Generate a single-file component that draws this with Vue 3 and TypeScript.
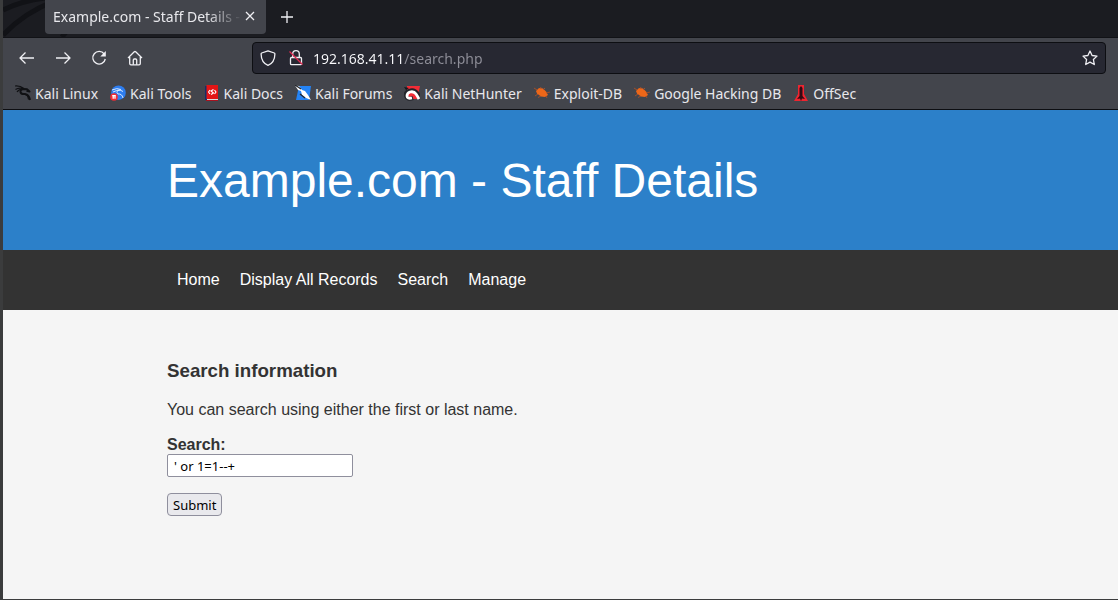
<script setup lang="ts">
import { ref } from 'vue'

interface Bookmark {
  icon: 'linux' | 'tools' | 'docs' | 'forums' | 'nethunter' | 'bug' | 'offsec'
  label: string
}

const bookmarks: Bookmark[] = [
  { icon: 'linux', label: 'Kali Linux' },
  { icon: 'tools', label: 'Kali Tools' },
  { icon: 'docs', label: 'Kali Docs' },
  { icon: 'forums', label: 'Kali Forums' },
  { icon: 'nethunter', label: 'Kali NetHunter' },
  { icon: 'bug', label: 'Exploit-DB' },
  { icon: 'bug', label: 'Google Hacking DB' },
  { icon: 'offsec', label: 'OffSec' },
]

const menu: string[] = ['Home', 'Display All Records', 'Search', 'Manage']
const address = ref('192.168.41.11/search.php')
const query = ref("' or 1=1--+")
</script>

<template>
  <div class="window">
    <header class="chrome">
      <div class="tabs">
        <svg class="wallpaper" viewBox="0 0 90 37" aria-hidden="true">
          <path d="M0 10Q18 1 42-2M0 35Q22 12 52 1M59 37Q68 24 86 16" />
        </svg>
        <div class="tab">
          <span class="tab-title">Example.com - Staff Details -</span>
          <button type="button" class="tab-close" aria-label="Close tab">
            <svg width="10" height="10" viewBox="0 0 10 10"><path d="M1 1l8 8M9 1l-8 8" /></svg>
          </button>
        </div>
        <button type="button" class="new-tab" aria-label="New tab">
          <svg width="14" height="14" viewBox="0 0 14 14"><path d="M7 1v12M1 7h12" /></svg>
        </button>
      </div>

      <div class="toolbar">
        <div class="history">
          <button type="button" aria-label="Back">
            <svg width="16" height="16" viewBox="0 0 16 16"><path d="M15 8H1.500M6.500 2.500L1 8l5.500 5.500" /></svg>
          </button>
          <button type="button" aria-label="Forward">
            <svg width="16" height="16" viewBox="0 0 16 16"><path d="M1 8h13.500M9.500 2.500L15 8l-5.500 5.500" /></svg>
          </button>
          <button type="button" aria-label="Reload">
            <svg width="16" height="16" viewBox="0 0 16 16">
              <path d="M13.200 4A6.300 6.300 0 1 0 14.300 9" />
              <path class="solid" d="M14.800 1v5.500H9.300z" />
            </svg>
          </button>
          <button type="button" aria-label="Home">
            <svg width="16" height="16" viewBox="0 0 16 16">
              <path d="M1 8l6.300-6.200q.7-.6 1.400 0L15 8M2.700 7v6.500q0 1.300 1.300 1.300h8q1.300 0 1.300-1.300V7" />
              <path d="M6.300 14.800V10q0-1 1-1h1.400q1 0 1 1v4.800" />
            </svg>
          </button>
        </div>
        <div class="address">
          <svg width="16" height="16" viewBox="0 0 16 16" aria-hidden="true">
            <path d="M8 .8L14.300 3q.6.2.6.9C14.800 9 12.500 13.500 8 15.300 3.500 13.500 1.200 9 1.100 3.900q0-.7.6-.9z" />
          </svg>
          <svg width="16" height="16" viewBox="0 0 16 16" aria-hidden="true">
            <path d="M4.700 7V4a3.300 3.300 0 0 1 6.600 0v3" />
            <rect x="2.500" y="7.500" width="11" height="7.200" rx="1" />
            <path class="strike" d="M1.500 1.500l13 13" />
          </svg>
          <input v-model="address" class="address-input" type="text" aria-label="Address" spellcheck="false" />
          <button type="button" aria-label="Bookmark this page">
            <svg width="16" height="16" viewBox="0 0 16 16">
              <path d="M8 1l2.100 4.500 4.900.6-3.600 3.400.9 5L8 12.100 3.700 14.500l.9-5L1 6.100l4.900-.6z" />
            </svg>
          </button>
        </div>
      </div>

      <nav class="bookmarks" aria-label="Bookmarks">
        <a v-for="item in bookmarks" :key="item.label" href="#" class="bookmark">
          <svg width="16" height="16" viewBox="0 0 16 16" aria-hidden="true">
            <g v-if="item.icon === 'linux'" class="dragon">
              <path d="M0 1Q5 .5 9 3.500M.5 4.500Q4 2 9 3.800M2 7Q4 4 8 4" />
              <path class="thick" d="M9 4Q5 4.500 5.500 7t4.500 2q4 .5 5 6M9 4l3 .3 2.500 2.200-3-.7" />
              <path d="M10 9.500q3 .5 3.500 5" />
            </g>
            <g v-else-if="item.icon === 'tools'">
              <circle cx="8.500" cy="7.700" r="7.300" fill="#2d7df0" />
              <path d="M2 5q5-2.500 9-.5M3 7q4-2 7-2M10 5q-5 1-2 4 4-.5 5 4M10 5l3 1.500" fill="none" stroke="#d5e8ff" stroke-width="1" />
              <circle cx="4" cy="12" r="3.800" fill="#f02c35" />
              <path d="M2.200 10.700h3.600M3.200 10.700v3M5 10.700v3" stroke="#fff" fill="none" />
            </g>
            <g v-else-if="item.icon === 'docs'">
              <path d="M1 1h2v14H1z" fill="#162e68" />
              <path d="M2.500 0H14v14H2.500z" fill="#e31515" />
              <path d="M3 14h11v1H3z" fill="#ddd" />
              <path d="M2 15h12v1H2z" fill="#a71320" />
              <path d="M6 5L4.500 7 6 9M10.500 5L12 7l-1.500 2M9.500 4.500L7 6l2.500 2L7 9.500" stroke="#fff" stroke-width="1.200" fill="none" />
            </g>
            <g v-else-if="item.icon === 'forums'">
              <path d="M4 1h12l-2 14H1z" fill="#2483f5" />
              <path d="M0 .5L4 1l3 4 3 1 3 4 3 5-5-2-4-3-1-4-3-1z" fill="#fff" />
              <path d="M0 0l6 4M5 9l5 4" stroke="#24262c" />
            </g>
            <g v-else-if="item.icon === 'nethunter'">
              <path d="M3 1h13l-3 13H3z" fill="#f12c36" />
              <path d="M9 13q-6 2-7-2t3-5q5-2 8 2t2 6" stroke="#22242a" stroke-width="4" fill="none" />
              <path d="M8 13q-5 1-5-2t3-4q4-1 6 2t3 5" stroke="#fff" stroke-width="2.800" fill="none" />
              <path d="M0 2l5 1-3 2" fill="#15171c" />
            </g>
            <g v-else-if="item.icon === 'bug'">
              <path d="M2 6l3-3 4 .5 3 3 2 3.500-3 2-4-.5-4-3z" fill="#ed6719" />
              <path d="M3 5L0 3M6 4l1-2M9 5l2-2M12 8l4-1M4 9l-3 2M7 11l-3 1.500M12 11l1 2" stroke="#b95225" stroke-width=".8" fill="none" />
            </g>
            <g v-else>
              <path d="M5 0h6v9l4 7H1l4-7z" fill="#ed2530" />
              <path d="M8 1l1.500 2v8l2.500 3-3-.5L8 16l-1-2.500-3 .5 2.500-3V3z" fill="#300b14" />
            </g>
          </svg>
          <span>{{ item.label }}</span>
        </a>
      </nav>
    </header>

    <div class="page">
      <header class="banner"><h1>Example.com - Staff Details</h1></header>
      <nav class="menu" aria-label="Main">
        <a v-for="entry in menu" :key="entry" href="#">{{ entry }}</a>
      </nav>
      <main class="content">
        <h3>Search information</h3>
        <p>You can search using either the first or last name.</p>
        <form @submit.prevent>
          <label for="search">Search:</label>
          <input id="search" v-model="query" type="text" spellcheck="false" />
          <button type="submit">Submit</button>
        </form>
      </main>
    </div>
  </div>
</template>

<style>
body {
  margin: 0;
}
</style>

<style scoped>
* {
  box-sizing: border-box;
}

.window {
  display: flex;
  flex-direction: column;
  min-height: 100vh;
  border-left: 3px solid #3b3c3d;
  border-bottom: 1px solid #3b3c3d;
  background: #f5f5f5;
}

.chrome {
  background: #43454c;
  color: #e8e8ec;
  font-family: "Noto Sans", sans-serif;
  font-size: 14px;
  border-bottom: 1px solid #0d0e12;
}

.chrome button {
  display: flex;
  align-items: center;
  justify-content: center;
  padding: 0;
  border: 0;
  background: none;
  color: inherit;
}

.chrome svg {
  flex: none;
  fill: none;
  stroke: #f0f0f4;
  stroke-width: 1.3;
  stroke-linejoin: round;
}

.tabs {
  position: relative;
  display: flex;
  align-items: flex-start;
  height: 38px;
  padding-left: 42px;
  background: #1b1c21;
  border-bottom: 1px solid #111216;
}

.chrome .wallpaper {
  position: absolute;
  left: 0;
  top: 0;
  width: 90px;
  height: 37px;
  stroke: #111216;
  stroke-width: 5;
}

.tab {
  position: relative;
  display: flex;
  align-items: center;
  width: 221px;
  height: 34px;
  padding: 0 8px 2px;
  background: #43454c;
  border-radius: 0 0 4px 4px;
}

.tab-title {
  flex: 1;
  white-space: nowrap;
  mask-image: linear-gradient(to left, transparent, #000 36px);
}

.tab-close {
  width: 16px;
  height: 16px;
}

.new-tab {
  width: 42px;
  height: 34px;
}

.toolbar {
  display: flex;
  align-items: center;
  height: 40px;
  padding: 0 12px 0 6px;
}

.history {
  display: flex;
  width: 243px;
}

.history button {
  width: 36px;
  height: 32px;
}

.chrome .solid {
  fill: #f0f0f4;
  stroke: none;
}

.chrome .strike {
  stroke: #e22850;
}

.address {
  display: flex;
  flex: 1;
  align-items: center;
  gap: 12px;
  height: 32px;
  padding: 0 7px;
  background: #272832;
  border: 1px solid #0d0e12;
  border-radius: 4px;
}

.address-input {
  flex: 1;
  min-width: 0;
  height: 28px;
  margin-left: -3px;
  padding: 0;
  border: 0;
  color: #fbfbfe;
  background: linear-gradient(to right, #fbfbfe 89px, #8f8f99 89px);
  background-clip: text;
  -webkit-text-fill-color: transparent;
  font: 14px "Noto Sans", sans-serif;
}

.bookmarks {
  display: flex;
  align-items: center;
  gap: 12px;
  height: 31px;
  padding: 0 12px 1px;
}

.bookmark {
  display: flex;
  align-items: center;
  gap: 4px;
  color: inherit;
  text-decoration: none;
  white-space: nowrap;
}

.chrome .bookmark svg {
  stroke: none;
}

.dragon {
  fill: none;
  stroke: #101114;
  stroke-width: 1.2;
}

.dragon .thick {
  stroke-width: 2;
}

.page {
  flex: 1;
  color: #333;
  font: 16px/19px "Liberation Sans", Arial, sans-serif;
}

.banner {
  padding: 41px 164px 39px;
  background: #2c80c9;
  color: #fff;
}

.banner h1 {
  margin: 0;
  font-size: 48px;
  font-weight: 400;
  line-height: 60px;
}

.menu {
  display: flex;
  gap: 20px;
  padding: 20px 174px;
  background: #333;
}

.menu a {
  color: #fff;
  line-height: 20px;
  text-decoration: none;
}

.content {
  padding: 50px 164px;
}

.content h3 {
  margin: 0 0 18px;
  line-height: 22px;
}

.content p {
  margin: 0 0 16px;
}

.content form {
  display: flex;
  flex-direction: column;
  align-items: flex-start;
}

.content label {
  font-weight: 700;
}

.content input {
  width: 186px;
  height: 23px;
  padding: 0 6px;
  border: 1px solid #8f8f9d;
  border-radius: 2px;
  background: #fff;
  color: #000;
  font: 13px "Noto Sans", sans-serif;
}

.content button {
  height: 23px;
  margin-top: 16px;
  padding: 0 5px;
  border: 1px solid #8f8f9d;
  border-radius: 4px;
  background: #e9e9ed;
  color: #000;
  font: 13px "Noto Sans", sans-serif;
}
</style>
